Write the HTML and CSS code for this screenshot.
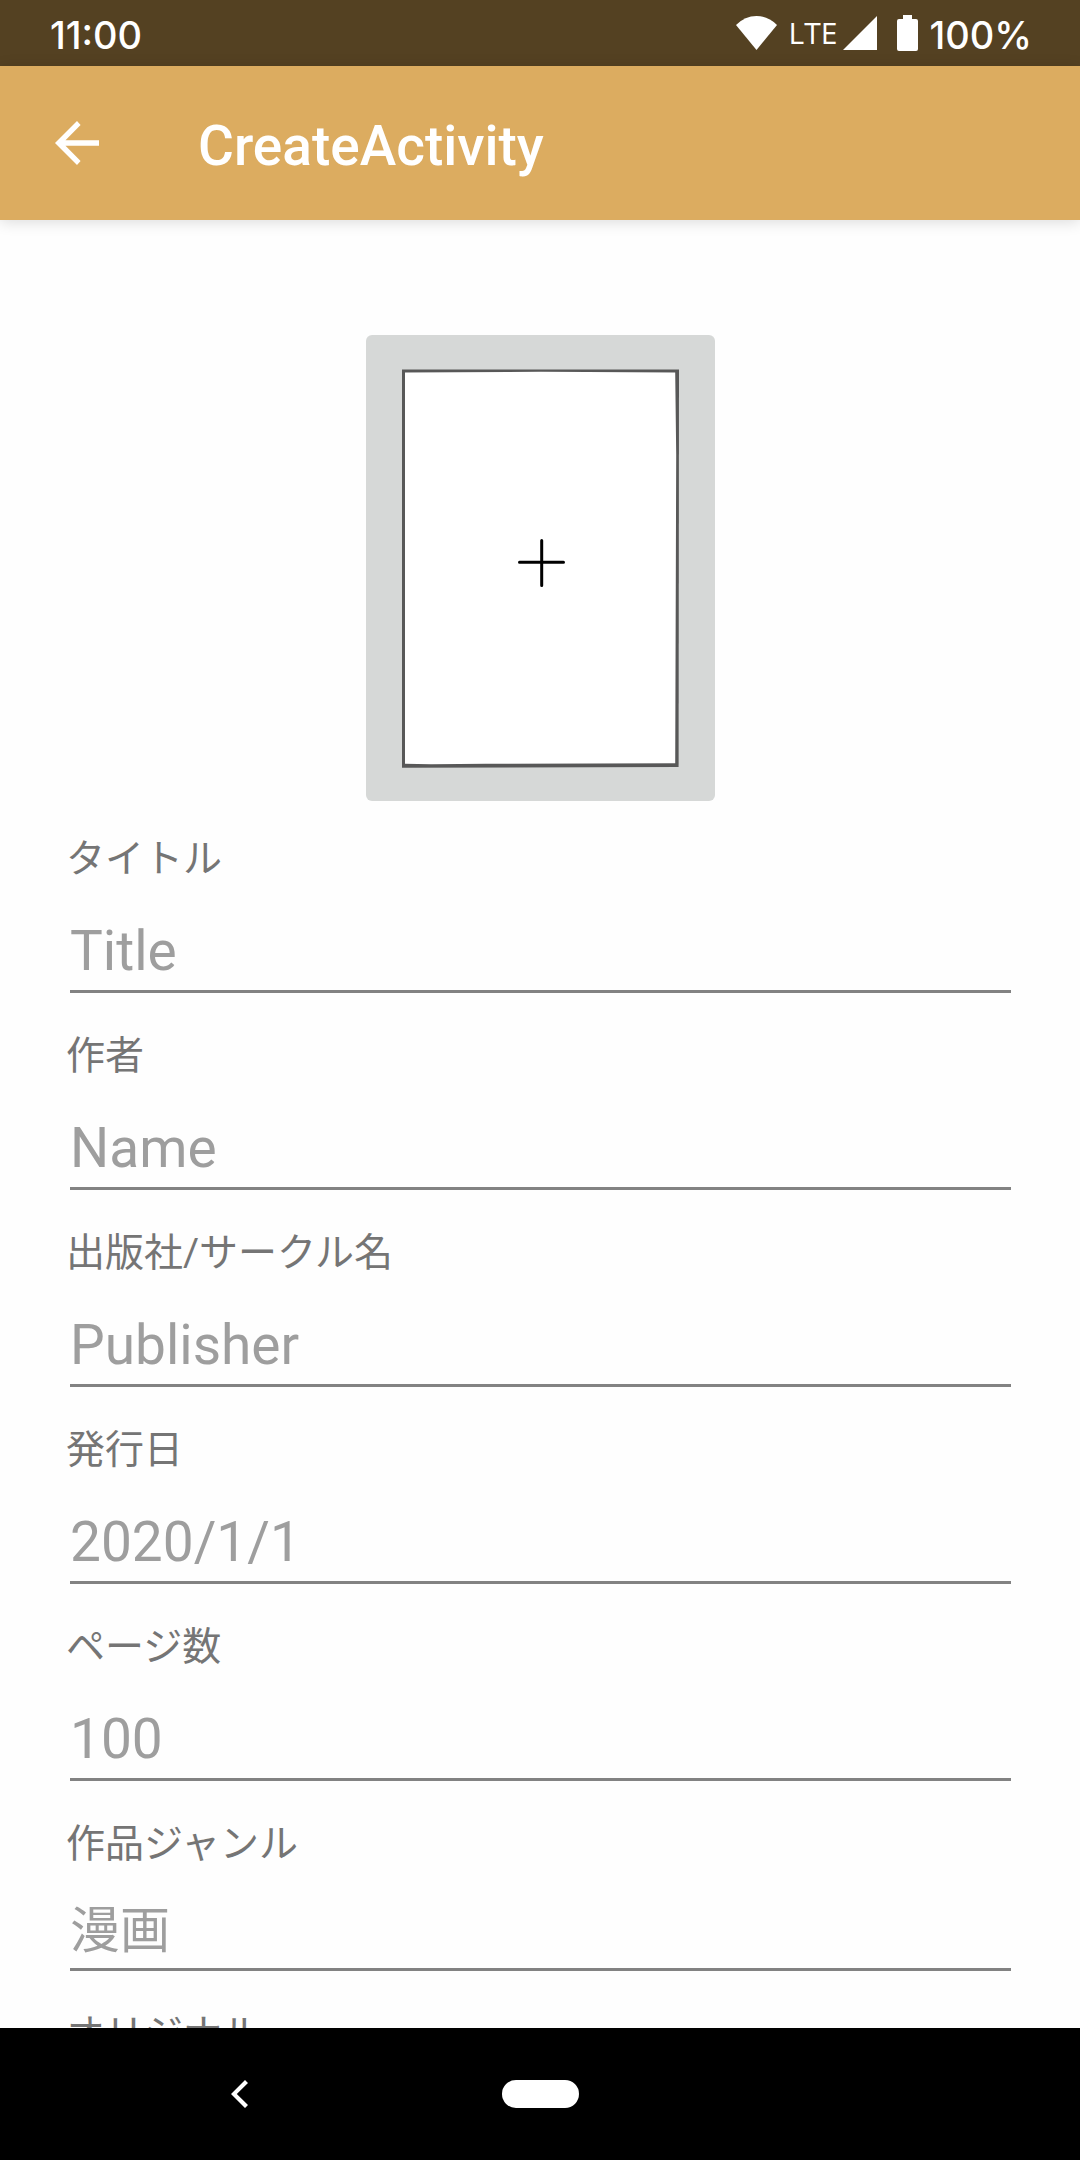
FILE: index.html
```html
<!DOCTYPE html>
<html lang="ja">
<head>
<meta charset="utf-8">
<meta name="viewport" content="width=device-width, initial-scale=1">
<title>CreateActivity</title>
<link rel="stylesheet" href="styles.css">
</head>
<body>
<div class="status-bar">
  <time class="status-text">11:00</time>
  <div class="status-icons">
    <svg class="wifi" width="42" height="34" viewBox="0 0 42 34" aria-hidden="true"><path d="M0 9Q9 0 20.500 0T41 9L20.500 34Z"/></svg>
    <span class="network">LTE</span>
    <svg class="signal" width="34" height="34" viewBox="0 0 34 34" aria-hidden="true"><path d="M34 0V34H0Z"/></svg>
    <svg class="battery" width="21" height="36" viewBox="0 0 21 36" aria-hidden="true"><path d="M6 0H15V4H19Q21 4 21 6V34Q21 36 19 36H2Q0 36 0 34V6Q0 4 2 4H6Z"/></svg>
    <span class="status-text">100%</span>
  </div>
</div>
<header class="app-bar">
  <button class="icon-button" type="button" aria-label="戻る">
    <svg width="44" height="44" viewBox="0 0 44 44" aria-hidden="true"><path d="M44 19.250H10.500L25.600 3.900L22 0L0 22L22 44L25.600 40.100L10.500 24.750H44Z"/></svg>
  </button>
  <h1 class="app-title">CreateActivity</h1>
</header>
<main class="content">
  <form class="form">
    <button class="cover" type="button" aria-label="表紙を追加">
      <svg width="349" height="466" viewBox="0 0 349 466" aria-hidden="true">
        <path fill="#585858" d="M36 34.400L313 34.400L312.600 432L36 432.700Z"/>
        <path fill="#fff" d="M39 37.600L175 36.800L309.200 37.600L310.200 120L309.200 428.200L120 428.700L65 429.200L39 428.700Z"/>
        <path fill="none" stroke="#000" stroke-width="3" stroke-linecap="round" d="M153.500 227.300H197.500M175.700 205.500V250.500"/>
      </svg>
    </button>
    <div class="field"><label for="title">タイトル</label><input id="title" type="text" placeholder="Title"></div>
    <div class="field"><label for="author">作者</label><input id="author" type="text" placeholder="Name"></div>
    <div class="field"><label for="publisher">出版社/サークル名</label><input id="publisher" type="text" placeholder="Publisher"></div>
    <div class="field"><label for="date">発行日</label><input id="date" type="text" placeholder="2020/1/1"></div>
    <div class="field"><label for="pages">ページ数</label><input id="pages" type="text" inputmode="numeric" placeholder="100"></div>
    <div class="field field-compact"><label for="genre">作品ジャンル</label><input id="genre" type="text" placeholder="漫画"></div>
    <div class="field field-compact"><label for="original">オリジナル</label><input id="original" type="text"></div>
  </form>
</main>
<nav class="nav-bar">
  <button class="icon-button" type="button" aria-label="戻る">
    <svg width="17" height="28" viewBox="0 0 17 28" aria-hidden="true"><path d="M14 0L17 3L5.800 14L17 25L14 28L0 14Z"/></svg>
  </button>
  <button class="home" type="button" aria-label="ホーム"></button>
</nav>
</body>
</html>
```
FILE: styles.css
```css
* {
  box-sizing: border-box;
}

body {
  margin: 0;
  height: 100vh;
  display: flex;
  flex-direction: column;
  background: #fefefe;
  font-family: Roboto, "Noto Sans CJK JP", sans-serif;
}

button {
  border: 0;
  padding: 0;
  background: none;
  cursor: pointer;
}

svg {
  display: block;
  fill: #fff;
}

.status-bar {
  flex: none;
  height: 66px;
  padding: 0 48px 0 50px;
  display: flex;
  align-items: center;
  justify-content: space-between;
  background: #544122;
  color: #fff;
}

.status-text {
  padding-top: 4px;
  font: 500 38px/40px Inter, sans-serif;
}

.status-icons {
  display: flex;
  align-items: center;
}

.network {
  margin: 0 6px 0 11px;
  font: 400 30px/36px "Open Sans", sans-serif;
}

.battery {
  margin: 0 11px 0 20px;
}

.app-bar {
  flex: none;
  height: 154px;
  padding: 0 55px;
  display: flex;
  align-items: center;
  gap: 99px;
  background: #dcac60;
  box-shadow: 0 2px 14px rgba(0, 0, 0, 0.14);
  position: relative;
}

.app-title {
  margin: 0;
  padding-top: 6px;
  color: #fff;
  font-size: 55px;
  font-weight: 500;
  line-height: 64px;
}

.content {
  flex: 1;
  min-height: 0;
  overflow-y: auto;
  scrollbar-width: none;
}

.form {
  padding: 115px 66px 0;
}

.cover {
  display: block;
  margin: 0 auto 16px;
  border-radius: 6px;
  background: #d6d8d7;
}

.field {
  padding: 14px 0 21px;
}

.field label {
  display: block;
  color: #757575;
  font-size: 39px;
  line-height: 56px;
}

.field input {
  display: block;
  width: calc(100% - 7px);
  height: 106px;
  margin-left: 4px;
  padding: 24px 0 0;
  border: 0;
  border-bottom: 3px solid #828282;
  border-radius: 0;
  outline: 0;
  background: none;
  color: #212121;
  font-family: inherit;
  font-size: 55px;
}

.field input::placeholder {
  color: #9e9e9e;
  opacity: 1;
}

.field-compact input {
  height: 99px;
  padding-top: 22px;
  font-size: 50px;
}

.nav-bar {
  flex: none;
  height: 132px;
  padding-left: 2px;
  display: grid;
  grid-template-columns: 44% 12% 44%;
  align-items: center;
  justify-items: center;
  background: #000;
}

.home {
  width: 77px;
  height: 28px;
  border-radius: 14px;
  background: #fff;
}
```
